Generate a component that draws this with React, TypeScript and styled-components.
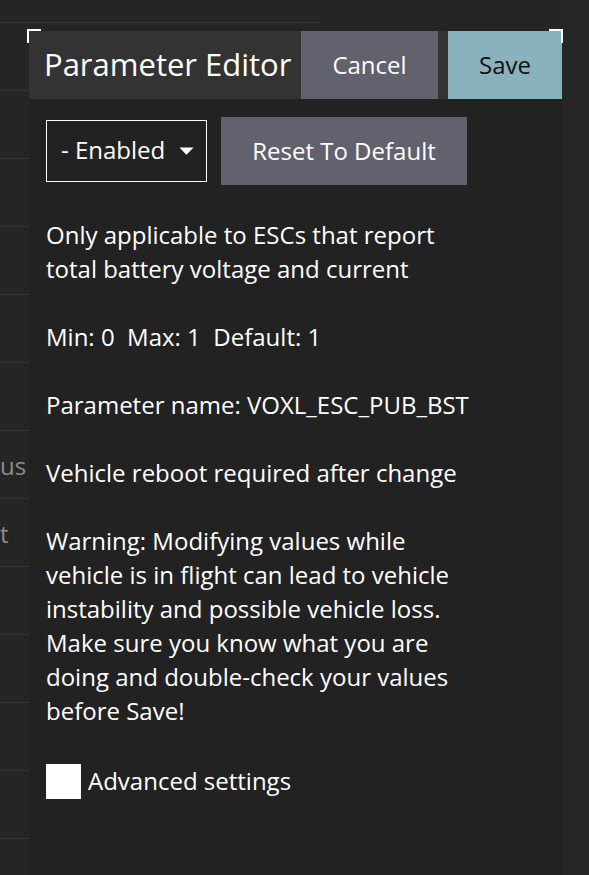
import React from "react";
import styled, { createGlobalStyle } from "styled-components";

const Global = createGlobalStyle`
  html, body { margin: 0; padding: 0; background: #252525; }
  body { font-family: "Open Sans", "Noto Sans", sans-serif; color: #fff; }
  * { box-sizing: border-box; }
`;

const Page = styled.div`
  position: relative;
  width: 589px;
  height: 875px;
  overflow: hidden;
  background: #252525;
`;

const List = styled.div`
  display: flex;
  flex-direction: column;
  width: 321px;
  padding-top: 22px;
`;

const ListRow = styled.div`
  height: 68px;
  border-top: 1px solid #363636;
  display: flex;
  align-items: center;
`;

const ListLabel = styled.div`
  white-space: nowrap;
  font-size: 24px;
  color: #8c8c8c;
  margin-top: 2px;
`;

const RightStrip = styled.div`
  position: absolute;
  top: 0;
  right: 0;
  width: 27px;
  height: 100%;
  background: #262626;
`;

const Panel = styled.div`
  position: absolute;
  left: 29px;
  top: 31px;
  width: 533px;
  bottom: 0;
  background: #222222;
  display: flex;
  flex-direction: column;
`;

const Corner = styled.div<{ $side: "left" | "right" }>`
  position: absolute;
  top: -2px;
  ${(p) => (p.$side === "left" ? "left: -2px;" : "right: -1px;")}
  width: 14px;
  height: 14px;
  border-top: 2px solid #fff;
  ${(p) =>
    p.$side === "left" ? "border-left: 2px solid #fff;" : "border-right: 2px solid #fff;"}
`;

const Header = styled.div`
  height: 68px;
  background: #333333;
  display: flex;
  align-items: stretch;
`;

const Title = styled.div`
  flex: 1;
  display: flex;
  align-items: center;
  padding-left: 15px;
  padding-bottom: 2px;
  font-size: 31px;
  color: #fff;
  white-space: nowrap;
`;

const HeaderButton = styled.button<{ $primary?: boolean; $w: number }>`
  width: ${(p) => p.$w}px;
  margin-left: ${(p) => (p.$primary ? 10 : 0)}px;
  border: 0;
  background: ${(p) => (p.$primary ? "#8ab2bc" : "#62616e")};
  color: ${(p) => (p.$primary ? "#111" : "#fff")};
  font-family: inherit;
  font-size: 24px;
  padding: 0 0 2px 0;
`;

const Body = styled.div`
  padding: 18px 0 0 17px;
  display: flex;
  flex-direction: column;
`;

const Controls = styled.div`
  display: flex;
  align-items: center;
  gap: 14px;
`;

const Select = styled.div`
  width: 161px;
  height: 62px;
  border: 1px solid #fff;
  display: flex;
  align-items: center;
  padding: 0 0 3px 14px;
  font-size: 24px;
  color: #fff;
  gap: 14px;
`;

const Caret = styled.svg`
  width: 15px;
  height: 8px;
  margin-top: 3px;
`;

const ResetButton = styled.button`
  width: 246px;
  height: 68px;
  border: 0;
  background: #62616e;
  color: #fff;
  font-family: inherit;
  font-size: 24px;
  padding: 0 0 2px 0;
`;

const Info = styled.div`
  margin-top: 33px;
  font-size: 24px;
  line-height: 34px;
  color: #fff;
  width: 436px;
`;

const Para = styled.p`
  margin: 0 0 34px 0;
  white-space: pre-wrap;
`;

const CheckRow = styled.label`
  display: flex;
  align-items: center;
  gap: 7px;
  font-size: 24px;
  color: #fff;
`;

const Box = styled.span`
  width: 35px;
  height: 35px;
  margin-top: 2px;
  background: #fff;
  display: inline-block;
`;

const rows = ["", "", "", "", "", "", "us", "t", "", "", "", "", ""];

export default function App() {
  return (
    <Page>
      <Global />
      <List>
        {rows.map((r, i) => (
          <ListRow key={i}>
            <ListLabel>{r}</ListLabel>
          </ListRow>
        ))}
      </List>
      <RightStrip />
      <Panel>
        <Corner $side="left" />
        <Corner $side="right" />
        <Header>
          <Title>Parameter Editor</Title>
          <HeaderButton $w={137}>Cancel</HeaderButton>
          <HeaderButton $w={114} $primary>
            Save
          </HeaderButton>
        </Header>
        <Body>
          <Controls>
            <Select>
              <span>- Enabled</span>
              <Caret viewBox="0 0 15 8">
                <path d="M0.5 0.5 L14.5 0.5 L8.1 7.2 Q7.5 7.8 6.9 7.2 Z" fill="#fff" />
              </Caret>
            </Select>
            <ResetButton>Reset To Default</ResetButton>
          </Controls>
          <Info>
            <Para>Only applicable to ESCs that report total battery voltage and current</Para>
            <Para>{"Min: 0  Max: 1  Default: 1"}</Para>
            <Para>Parameter name: VOXL_ESC_PUB_BST</Para>
            <Para>Vehicle reboot required after change</Para>
            <Para>
              Warning: Modifying values while vehicle is in flight can lead to vehicle
              instability and possible vehicle loss. Make sure you know what you are doing
              and double-check your values before Save!
            </Para>
            <CheckRow>
              <Box />
              Advanced settings
            </CheckRow>
          </Info>
        </Body>
      </Panel>
    </Page>
  );
}
